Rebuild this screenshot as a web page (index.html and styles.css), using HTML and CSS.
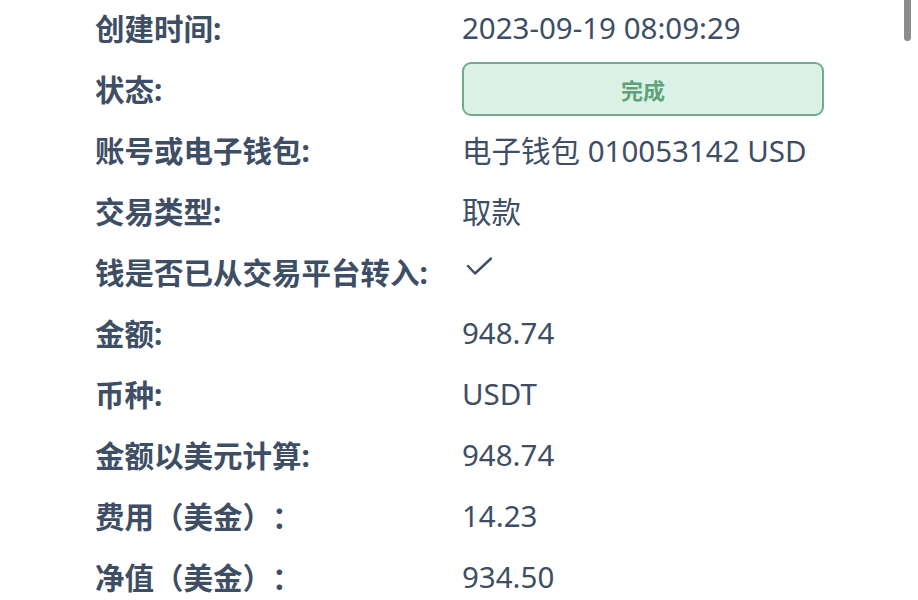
FILE: index.html
```html
<!DOCTYPE html>
<html lang="zh">
<head>
<meta charset="utf-8">
<link rel="stylesheet" href="styles.css">
</head>
<body>
<div class="scrollbar"></div>
<div class="details">
  <div class="label">创建时间:</div><div class="value">2023-09-19 08:09:29</div>
  <div class="label">状态:</div><div class="value"><div class="badge">完成</div></div>
  <div class="label">账号或电子钱包:</div><div class="value">电子钱包 010053142 USD</div>
  <div class="label">交易类型:</div><div class="value">取款</div>
  <div class="label">钱是否已从交易平台转入:</div><div class="value"><svg class="check" width="28" height="22" viewBox="0 0 28 22"><path d="M3 9 L10 16.5 L26 1.5" fill="none" stroke="#3e4e64" stroke-width="2.4" stroke-linecap="round" stroke-linejoin="round"/></svg></div>
  <div class="label">金额:</div><div class="value">948.74</div>
  <div class="label">币种:</div><div class="value">USDT</div>
  <div class="label">金额以美元计算:</div><div class="value">948.74</div>
  <div class="label">费用（美金）：</div><div class="value">14.23</div>
  <div class="label">净值（美金）：</div><div class="value">934.50</div>
</div>
</body>
</html>
```
FILE: styles.css
```css
html, body {
  margin: 0;
  padding: 0;
  background: #ffffff;
  overflow: hidden;
}
body {
  font-family: "Noto Sans", "Noto Sans CJK SC", sans-serif;
  color: #3e4e64;
  text-spacing-trim: space-all;
}
.scrollbar {
  position: fixed;
  top: -6px;
  left: 904px;
  width: 7px;
  height: 47px;
  background: #8c8c8c;
  border-radius: 4px;
}
.details {
  display: grid;
  grid-template-columns: 367px 1fr;
  grid-auto-rows: 61px;
  margin-top: -3px;
  padding-left: 95px;
}
.label, .value {
  display: flex;
  align-items: center;
  font-size: 29.5px;
  white-space: nowrap;
}
.label {
  font-weight: 700;
}
.value {
  font-weight: 400;
}
.badge {
  box-sizing: border-box;
  width: 362px;
  height: 54px;
  margin-top: 1px;
  border: 2px solid #6eae88;
  background: #dcf1e6;
  border-radius: 9px;
  color: #5ea27a;
  font-size: 22px;
  font-weight: 700;
  display: flex;
  align-items: center;
  justify-content: center;
}
.check {
  margin-left: 3px;
  margin-top: -8px;
}
```
